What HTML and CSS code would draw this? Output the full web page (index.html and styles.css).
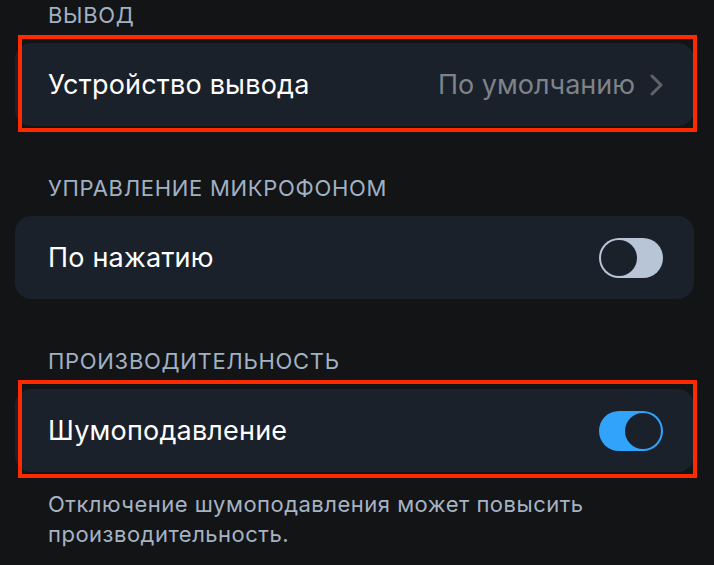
FILE: index.html
```html
<!DOCTYPE html>
<html lang="ru">
<head>
    <meta charset="UTF-8">
    <meta name="viewport" content="width=device-width, initial-scale=1.0">
    <title>Настройки звука</title>
    <link rel="stylesheet" href="styles.css">
</head>
<body>
<main class="settings">

    <section class="group">
        <h2 class="group-title">Вывод</h2>
        <div class="card marked">
            <span class="row-label">Устройство вывода</span>
            <span class="row-value">
                По умолчанию
                <svg class="chevron" width="13" height="22" viewBox="0 0 13 22">
                    <path d="M2 2 L11 11 L2 20" fill="none" stroke="currentColor" stroke-width="3" stroke-linecap="round" stroke-linejoin="round"/>
                </svg>
            </span>
        </div>
    </section>

    <section class="group">
        <h2 class="group-title">Управление микрофоном</h2>
        <div class="card">
            <span class="row-label">По нажатию</span>
            <span class="switch"><span class="knob"></span></span>
        </div>
    </section>

    <section class="group">
        <h2 class="group-title">Производительность</h2>
        <div class="card marked marked-low">
            <span class="row-label">Шумоподавление</span>
            <span class="switch on"><span class="knob"></span></span>
        </div>
        <p class="group-note">Отключение шумоподавления может повысить производительность.</p>
    </section>

</main>
</body>
</html>
```

FILE: styles.css
```css
body {
    margin: 0;
    background: #131416;
    font-family: Inter, "Noto Sans", sans-serif;
    color: #fff;
}

.settings {
    padding: 2px 20px 0 15px;
}

.group {
    margin-bottom: 49px;
}

.group:last-child {
    margin-bottom: 0;
}

.group-title {
    margin: 0 0 15px 33px;
    font-size: 22px;
    line-height: 26px;
    font-weight: 400;
    text-transform: uppercase;
    color: #a1b1c4;
    letter-spacing: 0.7px;
}

.card {
    position: relative;
    display: flex;
    align-items: center;
    justify-content: space-between;
    height: 83px;
    padding: 0 31px 0 33px;
    background: #1a212b;
    border-radius: 16px;
}

/* red annotation frame drawn over the row */
.marked::after {
    content: "";
    position: absolute;
    top: -8px;
    right: -3px;
    bottom: -6px;
    left: 3px;
    border: 4px solid #ff2a00;
}

.marked-low::after {
    top: -9px;
}

.row-label {
    font-size: 27px;
    letter-spacing: 0.2px;
}

.row-value {
    display: flex;
    align-items: center;
    gap: 15px;
    font-size: 27px;
    color: #7e8389;
}

.chevron {
    color: #5f6368;
}

.switch {
    position: relative;
    width: 64px;
    height: 40px;
    border-radius: 20px;
    background: #b7c5d7;
}

.knob {
    position: absolute;
    top: 2px;
    left: 2px;
    width: 36px;
    height: 36px;
    border-radius: 50%;
    background: #1a212b;
}

.switch.on {
    background: #31a3fa;
}

.switch.on .knob {
    left: auto;
    right: 2px;
}

.group-note {
    margin: 17px 0 0 33px;
    font-size: 22px;
    line-height: 30px;
    color: #a6b3c3;
    letter-spacing: 0.5px;
}
```
